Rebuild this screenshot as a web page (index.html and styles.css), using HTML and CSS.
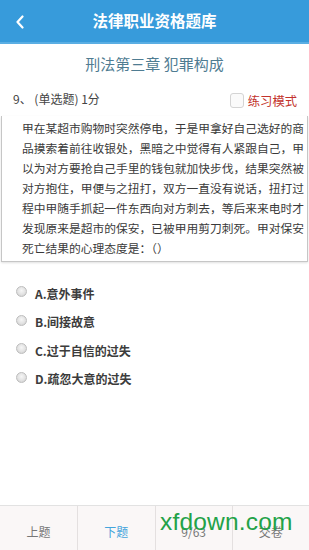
FILE: index.html
```html
<!DOCTYPE html>
<html lang="zh">
<head>
<meta charset="utf-8">
<link rel="stylesheet" href="styles.css">
</head>
<body>
<div class="page">
  <header class="topbar">
    <span class="back">
      <svg width="10" height="14" viewBox="0 0 10 14"><path d="M7.5 1.5 L2.5 7 L7.5 12.5" fill="none" stroke="#fff" stroke-width="2.2" stroke-linecap="round" stroke-linejoin="round"/></svg>
    </span>
    <h1 class="title">法律职业资格题库</h1>
    <span class="spacer"></span>
  </header>
  <div class="chapter">刑法第三章 犯罪构成</div>
  <div class="meta">
    <span class="qno">9、 (单选题) 1分</span>
    <label class="mode"><span class="check"></span><span class="mode-text">练习模式</span></label>
  </div>
  <div class="stem">甲在某超市购物时突然停电，于是甲拿好自己选好的商品摸索着前往收银处，黑暗之中觉得有人紧跟自己，甲以为对方要抢自己手里的钱包就加快步伐，结果突然被对方抱住，甲便与之扭打，双方一直没有说话，扭打过程中甲随手抓起一件东西向对方刺去，等后来来电时才发现原来是超市的保安，已被甲用剪刀刺死。甲对保安死亡结果的心理态度是：（）</div>
  <ul class="options">
    <li class="option"><span class="radio"></span><span>A.意外事件</span></li>
    <li class="option"><span class="radio"></span><span>B.间接故意</span></li>
    <li class="option"><span class="radio"></span><span>C.过于自信的过失</span></li>
    <li class="option"><span class="radio"></span><span>D.疏忽大意的过失</span></li>
  </ul>
  <footer class="bottombar">
    <div class="tab">上题</div>
    <div class="tab active">下题</div>
    <div class="tab">9/63</div>
    <div class="tab">交卷</div>
    <div class="watermark">xfdown.com</div>
  </footer>
</div>
</body>
</html>
```
FILE: styles.css
```css
* { box-sizing: border-box; }
html, body { margin: 0; padding: 0; }
body {
  font-family: "Noto Sans CJK SC", "Noto Sans", sans-serif;
  background: #fff;
  color: #333;
}
.page {
  width: 309px;
  height: 550px;
  display: flex;
  flex-direction: column;
  overflow: hidden;
}
.topbar {
  height: 44px;
  background: #379bdb;
  border-bottom: 2px solid #5aaee3;
  display: grid;
  grid-template-columns: 40px 1fr 40px;
  align-items: center;
}
.back {
  display: flex;
  justify-content: center;
  padding-top: 1px;
}
.back svg { display: block; }
.title {
  margin: 0;
  text-align: center;
  color: #fff;
  font-size: 15.5px;
  font-weight: bold;
  line-height: 1;
}
.chapter {
  height: 38px;
  display: flex;
  align-items: center;
  justify-content: center;
  font-size: 15px;
  color: #4f7c92;
  padding-top: 1px;
}
.meta {
  height: 34px;
  display: flex;
  align-items: center;
  justify-content: space-between;
  padding: 0 12px 0 13px;
}
.qno {
  font-size: 12px;
  color: #444;
  padding-bottom: 2px;
}
.mode {
  display: flex;
  align-items: center;
  gap: 4px;
  padding-top: 3px;
}
.check {
  width: 14px;
  height: 15px;
  border: 1px solid #d4d4d4;
  border-radius: 3px;
  background: #fafafa;
}
.mode-text {
  font-size: 12.3px;
  color: #c3322c;
}
.stem {
  margin: 0 1px 0 1px;
  border: 1px solid #c6c6c6;
  border-top: none;
  box-shadow: 0 1px 2px rgba(0,0,0,0.12);
  padding: 2px 0 3px 20px;
  font-size: 11.75px;
  line-height: 20px;
  color: #3a3a3a;
  height: 146px;
}
.options {
  list-style: none;
  margin: 0;
  padding: 17px 0 0 16px;
}
.option {
  height: 28.5px;
  display: flex;
  align-items: center;
  gap: 8px;
  font-size: 12px;
  font-weight: bold;
  color: #3c3c3c;
}
.radio {
  width: 11px;
  height: 11px;
  border-radius: 50%;
  border: 1px solid #bdbdbd;
  background: radial-gradient(circle at 50% 40%, #f6f6f6 0%, #e2e2e2 55%, #c9c9c9 100%);
  margin-top: -3px;
}
.bottombar {
  margin-top: auto;
  height: 45px;
  border-top: 1px solid #e2e2e2;
  background: #faf7f7;
  display: grid;
  grid-template-columns: repeat(4, 1fr);
  position: relative;
}
.tab {
  display: flex;
  align-items: center;
  justify-content: center;
  font-size: 12px;
  color: #777;
  border-left: 1px solid #e4e0e0;
  padding-top: 6px;
}
.tab:first-child { border-left: none; }
.tab.active { color: #45a5dc; }
.watermark {
  position: absolute;
  left: 160px;
  top: 4px;
  font-family: "Liberation Sans", Arial, sans-serif;
  font-size: 24.5px;
  color: #23a248;
  line-height: 1;
  letter-spacing: 0.2px;
}
```
